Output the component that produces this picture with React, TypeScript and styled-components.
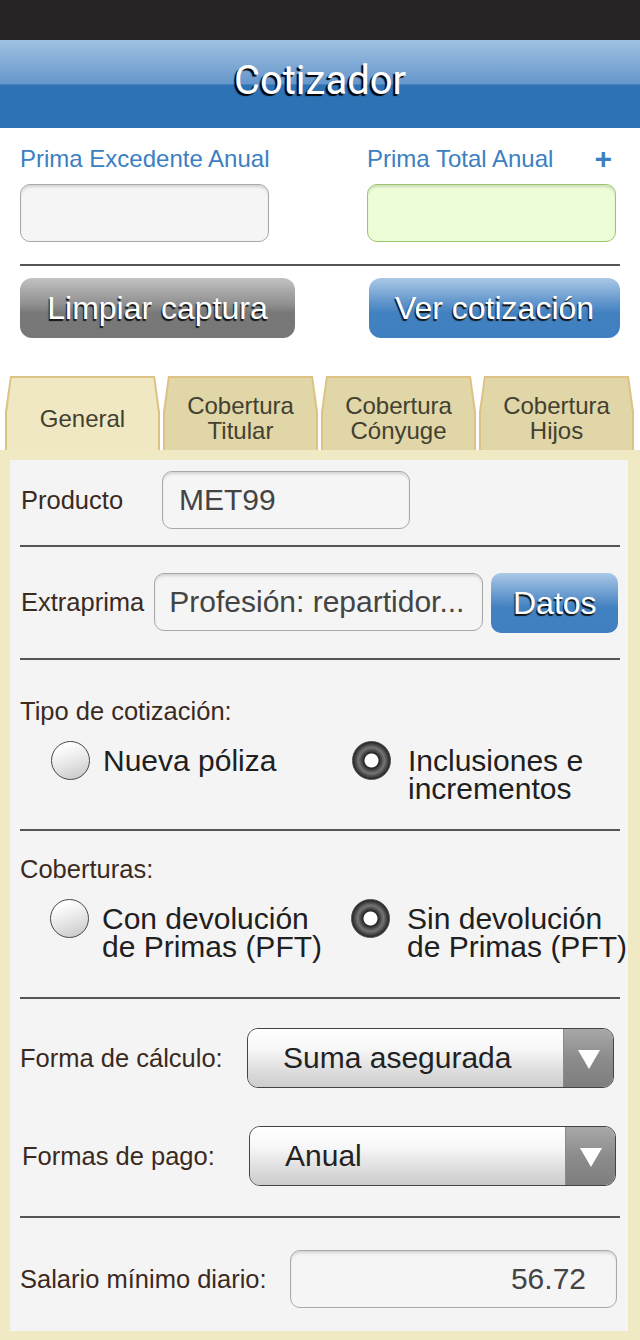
import React from 'react'
import styled, { createGlobalStyle } from 'styled-components'

const GlobalStyle = createGlobalStyle`
	html, body {
		margin: 0;
		padding: 0;
		background: #ffffff;
	}
	body {
		width: 640px;
		font-family: 'Liberation Sans', Arial, sans-serif;
	}
	* {
		box-sizing: border-box;
	}
`

const Page = styled.div`
	width: 640px;
	min-height: 1340px;
	display: flex;
	flex-direction: column;
	background: #ffffff;
`

const StatusBar = styled.div`
	height: 40px;
	background: #262425;
`

const Header = styled.header`
	height: 88px;
	display: flex;
	align-items: center;
	justify-content: center;
	padding-bottom: 8px;
	background: linear-gradient(to bottom, #a0c1e2 0%, #6697cc 50%, #2e72b6 51%, #2e72b6 100%);
`

const Title = styled.h1`
	margin: 0;
	font-family: Roboto, 'Liberation Sans', sans-serif;
	font-weight: 400;
	font-size: 40px;
	color: #ffffff;
	text-shadow: -2px 2px 1px #000000;
`

const TopSection = styled.section`
	padding: 17px 20px 0;
`

const FieldRow = styled.div`
	display: flex;
	justify-content: space-between;
`

const FieldColumn = styled.div<{ $width: number }>`
	width: ${({ $width }) => $width}px;
	display: flex;
	flex-direction: column;
`

const LabelLine = styled.div`
	display: flex;
	align-items: center;
	justify-content: space-between;
	height: 28px;
	margin-bottom: 11px;
	white-space: nowrap;
`

const BlueLabel = styled.span`
	font-size: 24px;
	color: #3b80c2;
	white-space: nowrap;
`

const PlusSign = styled.span`
	font-size: 30px;
	font-weight: bold;
	color: #3b80c2;
	margin-right: 8px;
	line-height: 28px;
`

const TextBox = styled.div<{ $width: number; $tone?: 'plain' | 'green'; $align?: 'left' | 'right'; $inset?: number }>`
	width: ${({ $width }) => $width}px;
	height: 58px;
	flex: none;
	display: flex;
	align-items: center;
	justify-content: ${({ $align }) => ($align === 'right' ? 'flex-end' : 'flex-start')};
	padding: ${({ $align, $inset }) => ($align === 'right' ? '0 30px 0 0' : `0 0 0 ${$inset ?? 16}px`)};
	border-radius: 10px;
	border: 1px solid ${({ $tone }) => ($tone === 'green' ? '#9cc46d' : '#a8a8a8')};
	background: ${({ $tone }) => ($tone === 'green' ? '#edfdd7' : '#f5f5f5')};
	box-shadow: inset 0 3px 3px -1px rgba(0, 0, 0, 0.14);
	font-size: 30px;
	color: #444444;
	white-space: nowrap;
	overflow: hidden;
`

const Divider = styled.hr<{ $top: number }>`
	margin: ${({ $top }) => $top}px 0 0;
	height: 2px;
	border: none;
	background: #555555;
`

const ButtonRow = styled.div`
	display: flex;
	justify-content: space-between;
	margin-top: 12px;
`

const GlossButton = styled.button<{ $width: number; $variant: 'gray' | 'blue' }>`
	width: ${({ $width }) => $width}px;
	height: 60px;
	flex: none;
	border: none;
	border-radius: 12px;
	padding: 0;
	font-family: 'Liberation Sans', Arial, sans-serif;
	font-size: 32px;
	color: #ffffff;
	text-shadow: -1px 2px 1px #111111;
	background: ${({ $variant }) =>
		$variant === 'gray'
			? 'linear-gradient(to bottom, #c2c2c2 0%, #8e8e8e 45%, #787878 58%, #777777 100%)'
			: 'linear-gradient(to bottom, #abc8e6 0%, #5890c9 45%, #4281c0 58%, #4080c0 100%)'};
`

const TabRow = styled.nav`
	display: flex;
	gap: 3px;
	margin-top: 38px;
	padding-left: 5px;
	height: 74px;
`

const Tab = styled.div`
	width: 155px;
	height: 74px;
	padding: 2px 2px 0;
	background: #dcc283;
	clip-path: polygon(5px 0, calc(100% - 5px) 0, 100% 36px, 100% 100%, 0 100%, 0 36px);
`

const TabFace = styled.div<{ $active?: boolean }>`
	height: 100%;
	display: flex;
	align-items: center;
	justify-content: center;
	padding-top: 8px;
	text-align: center;
	font-size: 24px;
	line-height: 25px;
	color: #434030;
	background: ${({ $active }) => ($active ? '#efe8c3' : '#e0d6a8')};
	clip-path: polygon(4.6px 0, calc(100% - 4.6px) 0, 100% 35px, 100% 100%, 0 100%, 0 35px);
`

const Frame = styled.div`
	background: #efe9c4;
	padding: 10px 12px 10px 10px;
`

const Panel = styled.div`
	background: #f4f4f4;
	padding: 11px 8px 23px 10px;
`

const Row = styled.div<{ $top?: number; $shift?: number }>`
	display: flex;
	align-items: center;
	margin-top: ${({ $top }) => $top ?? 0}px;
	padding-left: ${({ $shift }) => $shift ?? 0}px;
`

const FieldLabel = styled.span<{ $width?: number }>`
	${({ $width }) => ($width ? `width: ${$width}px; flex: none;` : '')}
	font-size: 25.5px;
	color: #3a2a1f;
	white-space: nowrap;
`

const Spacer = styled.span<{ $w: number }>`
	width: ${({ $w }) => $w}px;
	flex: none;
`

const DataButton = styled(GlossButton)`
	border-radius: 10px;
	margin-top: 2px;
	margin-left: 8px;
`

const SectionTitle = styled.div<{ $top: number }>`
	margin-top: ${({ $top }) => $top}px;
	font-size: 25.5px;
	line-height: 30px;
	color: #3a2a1f;
`

const RadioGroup = styled.div<{ $top: number; $shift: number }>`
	display: grid;
	grid-template-columns: 301px 1fr;
	margin-top: ${({ $top }) => $top}px;
	padding-left: ${({ $shift }) => $shift}px;
`

const RadioOption = styled.label<{ $gap: number }>`
	display: flex;
	align-items: flex-start;
	gap: ${({ $gap }) => $gap}px;
	font-size: 30px;
	line-height: 28px;
	color: #202020;
	white-space: nowrap;
`

const RadioDot = styled.span<{ $checked?: boolean }>`
	width: 39px;
	height: 39px;
	flex: none;
	margin-top: -6px;
	border-radius: 50%;
	border: 1.5px solid #484848;
	background: ${({ $checked }) =>
		$checked
			? 'radial-gradient(circle, #ffffff 0 6.5px, #222222 7.5px, #5a5a5a 11px, #747474 13px, #3a3a3a 17px, #1e1e1e 19px)'
			: 'linear-gradient(160deg, #ffffff 15%, #e6e6e6 55%, #c4c4c4 100%)'};
`

const SelectBox = styled.div`
	width: 367px;
	height: 60px;
	flex: none;
	display: flex;
	border: 1px solid #444444;
	border-radius: 11px;
	overflow: hidden;
`

const SelectValue = styled.div`
	flex: 1;
	display: flex;
	align-items: center;
	padding-left: 35px;
	font-size: 30px;
	color: #222222;
	background: linear-gradient(to bottom, #ffffff 0%, #f7f7f7 35%, #d8d8d8 80%, #cdcdcd 100%);
`

const SelectArrow = styled.div`
	width: 50px;
	flex: none;
	display: flex;
	align-items: center;
	justify-content: center;
	background: linear-gradient(to bottom, #a8a8a8 0%, #8c8c8c 50%, #7e7e7e 100%);
	border-left: 1px solid #8a8a8a;
`

const Triangle = styled.span`
	width: 0;
	height: 0;
	border-left: 11px solid transparent;
	border-right: 11px solid transparent;
	border-top: 19px solid #ffffff;
	margin-top: 2px;
`

const tabs = [
	{ label: 'General', active: true },
	{ label: 'Cobertura\nTitular' },
	{ label: 'Cobertura\nCónyuge' },
	{ label: 'Cobertura\nHijos' }
]

const Select = ({ value }: { value: string }) => (
	<SelectBox>
		<SelectValue>{value}</SelectValue>
		<SelectArrow>
			<Triangle />
		</SelectArrow>
	</SelectBox>
)

const Radio = ({ checked, gap = 14, children }: { checked?: boolean; gap?: number; children: React.ReactNode }) => (
	<RadioOption $gap={gap}>
		<RadioDot $checked={checked} />
		<span>{children}</span>
	</RadioOption>
)

const App = () => {
	return (
		<Page>
			<GlobalStyle />
			<StatusBar />
			<Header>
				<Title>Cotizador</Title>
			</Header>

			<TopSection>
				<FieldRow>
					<FieldColumn $width={249}>
						<LabelLine>
							<BlueLabel>Prima Excedente Anual</BlueLabel>
						</LabelLine>
						<TextBox $width={249} />
					</FieldColumn>
					<FieldColumn $width={253}>
						<LabelLine>
							<BlueLabel>Prima Total Anual</BlueLabel>
							<PlusSign>+</PlusSign>
						</LabelLine>
						<TextBox $width={249} $tone="green" />
					</FieldColumn>
				</FieldRow>
				<Divider $top={22} />
				<ButtonRow>
					<GlossButton $width={275} $variant="gray">
						Limpiar captura
					</GlossButton>
					<GlossButton $width={251} $variant="blue">
						Ver cotización
					</GlossButton>
				</ButtonRow>
			</TopSection>

			<TabRow>
				{tabs.map((tab) => (
					<Tab key={tab.label}>
						<TabFace $active={tab.active}>
							{tab.label.split('\n').map((line, idx) => (
								<React.Fragment key={idx}>
									{idx > 0 && <br />}
									{line}
								</React.Fragment>
							))}
						</TabFace>
					</Tab>
				))}
			</TabRow>

			<Frame>
				<Panel>
					<Row $shift={1}>
						<FieldLabel $width={141}>Producto</FieldLabel>
						<TextBox $width={248}>MET99</TextBox>
					</Row>
					<Divider $top={16} />

					<Row $top={24} $shift={1}>
						<FieldLabel>Extraprima</FieldLabel>
						<Spacer $w={10} />
						<TextBox $width={329} $inset={14}>
							Profesión: repartidor...
						</TextBox>
						<DataButton $width={127} $variant="blue">
							Datos
						</DataButton>
					</Row>
					<Divider $top={25} />

					<SectionTitle $top={36}>Tipo de cotización:</SectionTitle>
					<RadioGroup $top={21} $shift={31}>
						<Radio gap={13}>Nueva póliza</Radio>
						<Radio checked gap={17}>
							Inclusiones e<br />
							incrementos
						</Radio>
					</RadioGroup>
					<Divider $top={26} />

					<SectionTitle $top={23}>Coberturas:</SectionTitle>
					<RadioGroup $top={21} $shift={30}>
						<Radio gap={13}>
							Con devolución
							<br />
							de Primas (PFT)
						</Radio>
						<Radio checked gap={17}>
							Sin devolución
							<br />
							de Primas (PFT)
						</Radio>
					</RadioGroup>
					<Divider $top={36} />

					<Row $top={29}>
						<FieldLabel $width={227}>Forma de cálculo:</FieldLabel>
						<Select value="Suma asegurada" />
					</Row>
					<Row $top={38} $shift={2}>
						<FieldLabel $width={227}>Formas de pago:</FieldLabel>
						<Select value="Anual" />
					</Row>
					<Divider $top={30} />

					<Row $top={32}>
						<FieldLabel $width={270}>Salario mínimo diario:</FieldLabel>
						<TextBox $width={327} $align="right">
							56.72
						</TextBox>
					</Row>
				</Panel>
			</Frame>
		</Page>
	)
}

export default App
